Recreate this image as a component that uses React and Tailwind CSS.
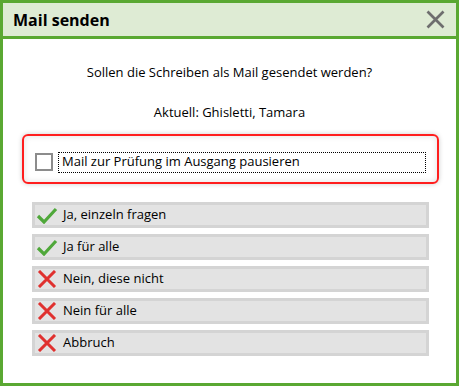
import React from "react";

const options = [
  { label: "Ja, einzeln fragen", ok: true },
  { label: "Ja für alle", ok: true },
  { label: "Nein, diese nicht", ok: false },
  { label: "Nein für alle", ok: false },
  { label: "Abbruch", ok: false },
];

const CheckIcon = () => (
  <svg width="22" height="18" viewBox="0 0 22 18" className="shrink-0">
    <path d="M2 10 L8 16 L20 3" fill="none" stroke="#4fa83a" strokeWidth="3.2" />
  </svg>
);

const CrossIcon = () => (
  <svg width="20" height="18" viewBox="0 0 20 18" className="shrink-0">
    <path d="M2 1 L18 17 M18 1 L2 17" fill="none" stroke="#e0312f" strokeWidth="3" />
  </svg>
);

const App = () => {
  return (
    <div
      className="w-[459px] h-[386px] border-[3px] border-[#5aa832] bg-white flex flex-col text-black"
      style={{ fontFamily: '"Open Sans", "Liberation Sans", sans-serif' }}
    >
      <div className="h-[36px] shrink-0 bg-[#deebd4] border-b-[3px] border-[#5aa832] flex items-center justify-between pl-[10px] pr-[11px]">
        <span className="text-[16px] font-bold">Mail senden</span>
        <svg width="19" height="19" viewBox="0 0 19 19">
          <path d="M1.5 1.5 L17.5 17.5 M17.5 1.5 L1.5 17.5" fill="none" stroke="#6e6e6e" strokeWidth="2.7" />
        </svg>
      </div>

      <div className="flex flex-col pt-[24px]">
        <p className="text-[13px] leading-[18px] text-center">Sollen die Schreiben als Mail gesendet werden?</p>
        <p className="text-[13px] leading-[18px] text-center mt-[22px]">Aktuell: Ghisletti, Tamara</p>

        <div className="ml-[19px] w-[417px] h-[50px] mt-[13px] border-2 border-[#ff1e1e] rounded-[6px] shadow-[inset_0_0_6px_rgba(0,0,0,0.12),0_0_5px_rgba(0,0,0,0.2)] flex items-center pl-[11px] pt-[6px]">
          <div className="w-[18px] h-[18px] border-2 border-[#8c8c8c] bg-white shrink-0"></div>
          <div className="ml-[5px] w-[368px] h-[21px] border border-dotted border-black flex items-center pl-[3px] text-[13px]">
            Mail zur Prüfung im Ausgang pausieren
          </div>
        </div>

        <div className="ml-[29px] w-[397px] mt-[18px] flex flex-col gap-[6px]">
          {options.map((o) => (
            <div
              key={o.label}
              className="h-[26px] border-[3px] border-[#d4d4d4] bg-[#e3e3e3] flex items-center pl-[1px] text-[13px]"
            >
              <div className="w-[22px] flex justify-center">
                {o.ok ? <CheckIcon /> : <CrossIcon />}
              </div>
              <span className="ml-[5px]">{o.label}</span>
            </div>
          ))}
        </div>
      </div>
    </div>
  );
};

export default App;
